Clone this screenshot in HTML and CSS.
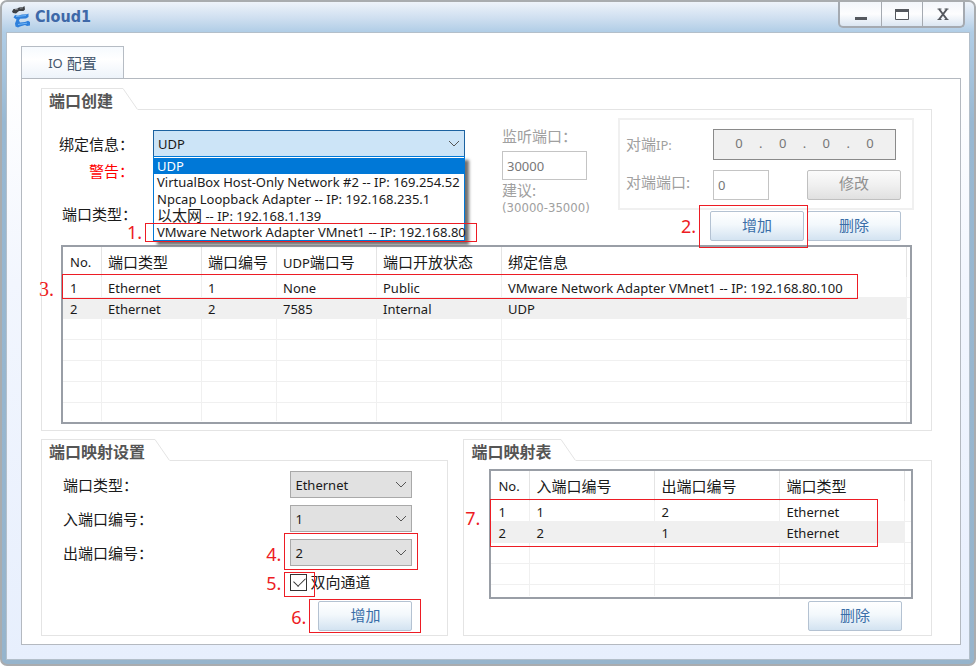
FILE: index.html
```html
<!DOCTYPE html>
<html lang="zh-CN">
<head>
<meta charset="utf-8">
<title>Cloud1</title>
<link rel="stylesheet" href="styles.css">
</head>
<body>
<div class="window">
  <header class="titlebar">
    <svg class="logo" width="20" height="22" viewBox="0 0 20 22" aria-hidden="true">
      <path d="M0 5.500 1.500 3 5 2.800 7 1.500 11 1 12.500 0 13 3.500 11.500 5 7 5 4 7.500 1 7Z" fill="#3f4146"/>
      <path d="M3 3.500 6 3.200M8 2.200l3-.4" stroke="#8a8d92"/>
      <path d="M1.500 11.500 3 9 6 9.800 10 8.600 15 8.200 16.500 7.500V11L14 12.500 8 12.800 7 14.500 8 16.500 13 16 16 14.800 18 16V19.500L15 20 13 19 8 20.500 6 21.500 3.500 20.500 3 17.500 4.500 13.500Z" fill="#2f80dc"/>
      <path d="M4 10.500 14 9.500M6 18.500 15 17.200" stroke="#6fb4f5" stroke-width="1"/>
    </svg>
    <h1>Cloud1</h1>
    <div class="winctl">
      <button type="button" aria-label="最小化"><svg width="14" height="14" viewBox="0 0 14 14"><rect x="1" y="10" width="12" height="3" fill="#55585e"/></svg></button>
      <button type="button" aria-label="最大化"><svg width="14" height="14" viewBox="0 0 14 14"><path d="M.5 2.500h13v10H.5Z" fill="#fff" stroke="#55585e"/><rect y="2" width="14" height="3" fill="#55585e"/></svg></button>
      <button type="button" aria-label="关闭"><svg width="14" height="14" viewBox="0 0 14 14"><path d="M3 2l8 10.500M11 2 3 12.500" fill="none" stroke="#55585e" stroke-width="2"/><path d="M1.500 2h4M8.500 2h4M1.500 12.500h4M8.500 12.500h4" stroke="#55585e"/></svg></button>
    </div>
  </header>
  <main class="client">
    <nav><a class="tab" href="#io">IO <span class="cjk">配置</span></a></nav>
    <div class="page" id="io">
      <section class="group">
        <div class="group-head"><h2>端口创建</h2><svg width="15" height="22" viewBox="0 0 15 22"><path d="M0 .5 14.500 21.500" stroke="#e4e4e4" fill="none"/></svg><i></i></div>
        <div class="group-body create">
          <div class="form">
            <div class="bind">
              <label for="bind">绑定信息：</label>
              <div class="combo active">
                <select id="bind"><option>UDP</option></select>
                <svg class="arrow" width="12" height="8" viewBox="0 0 12 8"><path d="M1 1l5 5 5-5"/></svg>
                <ul class="list">
                  <li class="on">UDP</li>
                  <li>VirtualBox Host-Only Network #2 -- IP: 169.254.52</li>
                  <li>Npcap Loopback Adapter -- IP: 192.168.235.1</li>
                  <li><span class="cjk">以太网</span> -- IP: 192.168.1.139</li>
                  <li>VMware Network Adapter VMnet1 -- IP: 192.168.80</li>
                </ul>
                <span class="mark m1"><b>1.</b></span>
              </div>
              <span class="warn">警告：</span>
              <span class="type">端口类型：</span>
            </div>
            <div class="listen">
              <label for="listen">监听端口：</label>
              <input id="listen" value="30000" disabled>
              <span>建议:</span>
              <small>(30000-35000)</small>
            </div>
            <div class="remote">
              <div class="peer">
                <label for="ip1">对端<span class="latin">IP:</span></label>
                <div class="ip">
                  <input id="ip1" value="0" disabled><span>.</span><input aria-label="IP 2" value="0" disabled><span>.</span><input aria-label="IP 3" value="0" disabled><span>.</span><input aria-label="IP 4" value="0" disabled>
                </div>
                <label class="upper" for="pport">对端端口:</label>
                <div class="peer-row"><input id="pport" value="0" disabled><button type="button" class="btn" disabled>修改</button></div>
              </div>
              <div class="actions">
                <div class="marked"><button type="button" class="btn">增加</button><span class="mark m2"><b>2.</b></span></div>
                <button type="button" class="btn">删除</button>
              </div>
            </div>
          </div>
          <div class="grid-box tall">
            <table class="ports">
              <colgroup><col class="c39"><col class="c100"><col class="c75"><col class="c100"><col class="c125"><col><col class="c3"></colgroup>
              <thead><tr><th class="latin">No.</th><th>端口类型</th><th>端口编号</th><th><span class="latin">UDP</span>端口号</th><th>端口开放状态</th><th>绑定信息</th><th></th></tr></thead>
              <tbody>
                <tr><td>1</td><td>Ethernet</td><td>1</td><td>None</td><td>Public</td><td>VMware Network Adapter VMnet1 -- IP: 192.168.80.100</td><td></td></tr>
                <tr class="alt"><td>2</td><td>Ethernet</td><td>2</td><td>7585</td><td>Internal</td><td>UDP</td><td></td></tr>
                <tr><td></td><td></td><td></td><td></td><td></td><td></td><td></td></tr>
                <tr><td></td><td></td><td></td><td></td><td></td><td></td><td></td></tr>
                <tr><td></td><td></td><td></td><td></td><td></td><td></td><td></td></tr>
                <tr><td></td><td></td><td></td><td></td><td></td><td></td><td></td></tr>
                <tr class="last"><td></td><td></td><td></td><td></td><td></td><td></td><td></td></tr>
              </tbody>
            </table>
            <span class="mark m3"><b>3.</b></span>
          </div>
        </div>
      </section>
      <div class="lower">
        <section class="group">
          <div class="group-head"><h2>端口映射设置</h2><svg width="15" height="22" viewBox="0 0 15 22"><path d="M0 .5 14.500 21.500" stroke="#e4e4e4" fill="none"/></svg><i></i></div>
          <div class="group-body mapping">
            <label for="mtype">端口类型：</label>
            <div class="combo"><select id="mtype"><option>Ethernet</option></select><svg class="arrow" width="12" height="8" viewBox="0 0 12 8"><path d="M1 1l5 5 5-5"/></svg></div>
            <label for="min">入端口编号：</label>
            <div class="combo"><select id="min"><option>1</option></select><svg class="arrow" width="12" height="8" viewBox="0 0 12 8"><path d="M1 1l5 5 5-5"/></svg></div>
            <label for="mout">出端口编号：</label>
            <div class="combo"><select id="mout"><option>2</option></select><svg class="arrow" width="12" height="8" viewBox="0 0 12 8"><path d="M1 1l5 5 5-5"/></svg><span class="mark m4"><b>4.</b></span></div>
            <div class="check"><input type="checkbox" id="both" checked><label for="both">双向通道</label><span class="mark m5"><b>5.</b></span></div>
            <div class="marked add"><button type="button" class="btn">增加</button><span class="mark m6"><b>6.</b></span></div>
          </div>
        </section>
        <section class="group">
          <div class="group-head"><h2>端口映射表</h2><svg width="15" height="22" viewBox="0 0 15 22"><path d="M0 .5 14.500 21.500" stroke="#e4e4e4" fill="none"/></svg><i></i></div>
          <div class="group-body maptable">
            <div class="grid-box short">
              <table>
                <colgroup><col class="c39"><col class="c125"><col class="c125"><col class="c125"><col></colgroup>
                <thead><tr><th class="latin">No.</th><th>入端口编号</th><th>出端口编号</th><th>端口类型</th><th></th></tr></thead>
                <tbody>
                  <tr><td>1</td><td>1</td><td>2</td><td>Ethernet</td><td></td></tr>
                  <tr class="alt"><td>2</td><td>2</td><td>1</td><td>Ethernet</td><td></td></tr>
                  <tr><td></td><td></td><td></td><td></td><td></td></tr>
                  <tr><td></td><td></td><td></td><td></td><td></td></tr>
                  <tr class="last"><td></td><td></td><td></td><td></td><td></td></tr>
                </tbody>
              </table>
              <span class="mark m7"><b>7.</b></span>
            </div>
            <button type="button" class="btn">删除</button>
          </div>
        </section>
      </div>
    </div>
  </main>
</div>
</body>
</html>
```

FILE: styles.css
```css
* { box-sizing: border-box; }
body {
  margin: 0;
  background: #fff;
  color: #1a1a1a;
  font: 13px/16px "Noto Sans", "Noto Sans CJK SC", sans-serif;
}
input, select, button { font: inherit; color: inherit; margin: 0; }
h1, h2, ul { margin: 0; padding: 0; }
label, .cjk, th, .type, .warn, .listen span, .btn { font-family: "Noto Sans CJK SC", sans-serif; font-size: 15px; font-weight: 400; }
.latin { font-family: "Noto Sans", sans-serif; font-size: 13px; }

.window {
  min-height: 100vh;
  display: flex;
  flex-direction: column;
  padding: 0 4px 4px;
  border: 2px solid #a9acaf;
  border-radius: 7px;
  background: linear-gradient(#eef3fa 0, #cfdff0 16px, #b0cde6 30px, #98b8d2 120px, #96b4cc 100%);
}
.titlebar { display: flex; align-items: center; height: 30px; padding-left: 6px; }
.titlebar h1 { flex: 1; margin-left: 3px; font: bold 16px/20px "DejaVu Sans Condensed", "Noto Sans", sans-serif; color: #3e68a8; }
.winctl {
  align-self: flex-start;
  display: flex;
  height: 26px;
  margin-right: 5px;
  border: 1px solid #a5aab1;
  border-width: 0 2px 2px;
  border-radius: 0 0 5px 5px;
  background: linear-gradient(#f3f6fb, #fdfdfe 50%, #dbe6f2);
}
.winctl button { width: 41px; padding: 0; border: 0; border-left: 1px solid #a5aab1; background: none; }
.winctl button:first-child { border-left: 0; }
.winctl svg { display: block; margin: auto; }

.client {
  flex: 1;
  display: flex;
  flex-direction: column;
  padding: 13px 8px 14px 14px;
  border: 1px solid #b3bfca;
  background: linear-gradient(#fff, #fff 45px, #f2f6fe 250px, #e7effd);
}
.tab {
  display: flex;
  align-items: center;
  justify-content: center;
  gap: 4px;
  width: 103px;
  height: 32px;
  border: 1px solid #b6bcc4;
  border-bottom: 0;
  background: linear-gradient(#f6fafe, #fff 40%, #edf3fa);
  color: #44566c;
  text-decoration: none;
}
.page { flex: 1; padding: 9px 28px 7px 19px; border: 1px solid #b4b9c0; background: #fff; }

.group { display: flex; flex-direction: column; }
.group-head { display: flex; height: 22px; }
.group-head h2 {
  padding: 2px 10px 0 7px;
  border: 1px solid #e4e4e4;
  border-width: 1px 0 0 1px;
  font: bold 16px/18px "Noto Sans CJK SC", sans-serif;
  color: #555;
}
.group-head i { flex: 1; border-bottom: 1px solid #e4e4e4; }
.group-body { flex: 1; border: 1px solid #e4e4e4; border-top: 0; }

.create { padding: 8px 19px 6px 19px; }
.form { display: flex; height: 127px; }
.bind {
  flex: 1;
  display: grid;
  grid-template-columns: 74px 1fr;
  grid-template-rows: 27px 27px 60px;
  column-gap: 20px;
  align-content: start;
  align-items: center;
  justify-items: start;
  padding-top: 12px;
  margin-left: -2px;
}
.bind label, .type, .warn { white-space: nowrap; }
.bind .warn { grid-column: 1; padding-left: 30px; color: #f00; }
.type { grid-column: 1; padding-left: 3px; }

.combo { position: relative; width: 100%; height: 27px; }
.combo select {
  appearance: none;
  display: block;
  width: 100%;
  height: 100%;
  padding: 0 4px;
  border: 1px solid #a9a9a9;
  border-radius: 0;
  background: #e1e1e1;
}
.combo.active select { border-color: #1c62a0; background: #cce4f7; }
.arrow { position: absolute; right: 5px; top: 10px; fill: none; stroke: #555; }
.list {
  position: absolute;
  z-index: 2;
  top: 26px;
  left: 0;
  width: 100%;
  height: 85px;
  display: flex;
  flex-direction: column;
  padding-top: 1px;
  border: 1px solid #0078d7;
  background: #fff;
  box-shadow: 4px 4px 3px #707070;
  list-style: none;
}
.list li { flex: 1; padding-left: 3px; white-space: nowrap; line-height: 16px; }
.list .on { background: #0078d7; color: #fff; }

.listen { width: 90px; margin-left: 37px; padding-top: 8px; color: #a0a0a0; }
.listen label, .listen span { display: block; line-height: 20px; white-space: nowrap; }
.listen input { display: block; width: 85px; height: 29px; margin: 5px 0 0; }
.listen small { display: block; font: 13px/16px "DejaVu Sans Condensed", sans-serif; white-space: nowrap; }
.listen input, .peer-row input { padding: 0 4px; border: 1px solid #c4c4c4; background: #fff; color: #777; }

.remote { width: 296px; margin-left: 26px; margin-right: -2px; }
.peer {
  display: grid;
  grid-template-columns: 87px 1fr;
  grid-template-rows: 31px 29px;
  row-gap: 10px;
  align-items: center;
  height: 92px;
  padding: 9px 11px 0 6px;
  border: 2px solid #f0f0f0;
  color: #a0a0a0;
}
.peer .upper { align-self: start; line-height: 24px; }
.ip {
  display: flex;
  align-items: center;
  justify-content: space-between;
  width: 183px;
  height: 31px;
  padding: 0 17px 4px;
  border: 1px solid #8a8a8a;
  background: #f0f0f0;
  color: #777;
}
.ip input { width: 16px; padding: 0; border: 0; background: none; text-align: center; }
.ip span { width: 16px; text-align: center; }
.peer-row { display: flex; justify-content: space-between; }
.peer-row input { width: 56px; }
.btn {
  width: 94px;
  height: 30px;
  padding: 0 0 3px;
  border: 1px solid #b4c2d2;
  border-radius: 2px;
  background: linear-gradient(#fff, #f3f8fc 45%, #d3e3f1);
  color: #3a6ea8;
}
.btn:disabled { border-color: #c0c0c0; background: linear-gradient(#fbfbfb, #f0f0f0 50%, #e0e0e0); color: #909090; }
.actions { display: flex; justify-content: flex-end; gap: 3px; padding: 1px 13px 0 0; }
.marked { position: relative; }

.grid-box { position: relative; border: 2px solid #999ea6; }
.tall { height: 179px; }
.short { height: 130px; }
table { width: 100%; border-collapse: separate; border-spacing: 0; table-layout: fixed; }
.c39 { width: 39px; }
.c75 { width: 75px; }
.c100 { width: 100px; }
.c125 { width: 125px; }
.c3 { width: 3px; }
th { height: 30px; padding: 0 0 0 6px; text-align: left; white-space: nowrap; border-right: 1px solid #e4e4e4; }
td { height: 21px; padding: 2px 0 0 6px; line-height: 16px; white-space: nowrap; border: 1px solid #f0f0f0; border-width: 0 1px 1px 0; }
th:last-child, td:last-child { padding: 0; border-right: 0; }
th:first-child, td:first-child { padding-left: 7px; }
th.latin { font-size: 13px; }
.alt td { background: #f0f0f0; }
.alt td:last-child { background: none; }
.last td { height: 18px; border-bottom: 0; }
.short .last td { height: 11px; padding: 0; line-height: 0; }

.lower { display: grid; grid-template-columns: 407fr 468fr; gap: 15px; margin-top: 8px; }
.mapping {
  display: grid;
  grid-template-columns: 1fr 122px;
  grid-template-rows: 27px 27px 27px 18px 33px;
  row-gap: 7px;
  align-items: center;
  padding: 10px 35px 0 21px;
}
.check { position: relative; grid-column: 2; display: flex; align-items: center; gap: 3px; white-space: nowrap; }
.check input { appearance: none; position: relative; width: 17px; height: 17px; border: 1px solid #333; background: #fff; }
.check input:checked::after {
  content: "";
  position: absolute;
  left: 3px;
  top: 2px;
  width: 10px;
  height: 6px;
  border: solid #333;
  border-width: 0 0 1px 1px;
  transform: rotate(-45deg);
}
.add { grid-column: 2; align-self: end; justify-self: end; }
.maptable { padding: 8px 18px 4px 25px; }
.maptable > .btn { display: block; margin: 2px 11px 0 auto; }

.mark { position: absolute; z-index: 3; border: 1px solid #ed1c24; pointer-events: none; }
.mark b { position: absolute; right: 100%; margin-right: 4px; color: #ed1c24; font: 18px/20px "Noto Sans", sans-serif; }
.m1 { left: -8px; top: 93px; width: calc(100% + 20px); height: 19px; }
.m1 b { top: -2px; }
.m2 { left: -11px; top: -6px; width: 109px; height: 43px; }
.m2 b { top: 10px; }
.m3 { left: -1px; top: 27px; width: 796px; height: 25px; }
.m3 b { top: 4px; margin-right: 9px; font-family: "Liberation Serif", serif; font-size: 20px; }
.m4 { left: -6px; top: -6px; width: 134px; height: 37px; }
.m4 b { top: 10px; }
.m5 { left: -6px; top: -2px; width: 31px; height: 25px; }
.m5 b { top: 0; }
.m6 { left: -9px; top: -2px; width: 112px; height: 34px; }
.m6 b { top: 7px; }
.m7 { left: -1px; top: 28px; width: 388px; height: 48px; }
.m7 b { top: 8px; margin-right: 11px; }
```
